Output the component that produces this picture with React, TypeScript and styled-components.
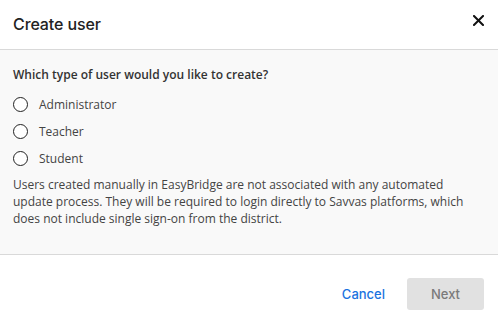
import styled, { createGlobalStyle } from "styled-components";

const GlobalStyle = createGlobalStyle`
  html, body {
    margin: 0;
    padding: 0;
    background: #ffffff;
  }
  * {
    box-sizing: border-box;
  }
`;

const Dialog = styled.div`
  width: 498px;
  height: 323px;
  display: flex;
  flex-direction: column;
  background: #ffffff;
  font-family: "Open Sans", "Liberation Sans", sans-serif;
  color: #333333;
`;

const Header = styled.div`
  height: 50px;
  display: flex;
  align-items: center;
  justify-content: space-between;
  padding: 0 13px 2px 13px;
  border-bottom: 1px solid #d9d9d9;
`;

const Title = styled.h2`
  margin: 0;
  font-family: "Inter", "Noto Sans", sans-serif;
  font-size: 16px;
  font-weight: 500;
  color: #222222;
  letter-spacing: -0.1px;
`;

const CloseButton = styled.button`
  border: none;
  background: none;
  padding: 0;
  margin-top: -6px;
  width: 14px;
  height: 14px;
  display: flex;
  align-items: center;
  justify-content: center;
  cursor: pointer;
`;

const Body = styled.div`
  height: 205px;
  background: #f9f9f9;
  padding: 16px 13px 0 13px;
  border-bottom: 1px solid #d9d9d9;
`;

const Question = styled.p`
  margin: 0 0 12px 0;
  font-size: 12px;
  font-weight: 600;
  color: #333333;
`;

const Options = styled.div`
  display: flex;
  flex-direction: column;
  gap: 9px;
`;

const Option = styled.label`
  display: flex;
  align-items: center;
  gap: 11px;
  height: 18px;
  font-size: 12px;
  color: #444444;
  cursor: pointer;
`;

const Radio = styled.span`
  width: 15px;
  height: 15px;
  border-radius: 50%;
  border: 1.5px solid #222222;
  background: #ffffff;
  flex-shrink: 0;
`;

const Note = styled.p`
  margin: 9px 0 0 0;
  font-size: 12px;
  line-height: 17px;
  color: #444444;
`;

const Footer = styled.div`
  flex: 1;
  display: flex;
  align-items: flex-start;
  justify-content: flex-end;
  gap: 22px;
  padding: 23px 14px 0 0;
`;

const LinkButton = styled.button`
  border: none;
  background: none;
  padding: 0;
  height: 32px;
  font-family: "Inter", "Noto Sans", sans-serif;
  font-size: 13px;
  font-weight: 500;
  color: #1a73e0;
  cursor: pointer;
`;

const PrimaryButton = styled.button<{ disabled?: boolean }>`
  width: 77px;
  height: 32px;
  border: none;
  border-radius: 3px;
  background: ${(p) => (p.disabled ? "#e1e1e1" : "#1a73e0")};
  color: ${(p) => (p.disabled ? "#7a7a7a" : "#ffffff")};
  font-family: "Inter", "Noto Sans", sans-serif;
  font-size: 13px;
  font-weight: 500;
`;

const roles = ["Administrator", "Teacher", "Student"];

export default function App() {
  return (
    <>
      <GlobalStyle />
      <Dialog>
        <Header>
          <Title>Create user</Title>
          <CloseButton aria-label="Close">
            <svg width="11" height="11" viewBox="0 0 11 11">
              <path d="M1 1 L10 10 M10 1 L1 10" stroke="#111" strokeWidth="2" strokeLinecap="square" />
            </svg>
          </CloseButton>
        </Header>
        <Body>
          <Question>Which type of user would you like to create?</Question>
          <Options>
            {roles.map((r) => (
              <Option key={r}>
                <Radio />
                {r}
              </Option>
            ))}
          </Options>
          <Note>
            Users created manually in EasyBridge are not associated with any automated
            update process. They will be required to login directly to Savvas platforms, which
            does not include single sign-on from the district.
          </Note>
        </Body>
        <Footer>
          <LinkButton>Cancel</LinkButton>
          <PrimaryButton disabled>Next</PrimaryButton>
        </Footer>
      </Dialog>
    </>
  );
}
